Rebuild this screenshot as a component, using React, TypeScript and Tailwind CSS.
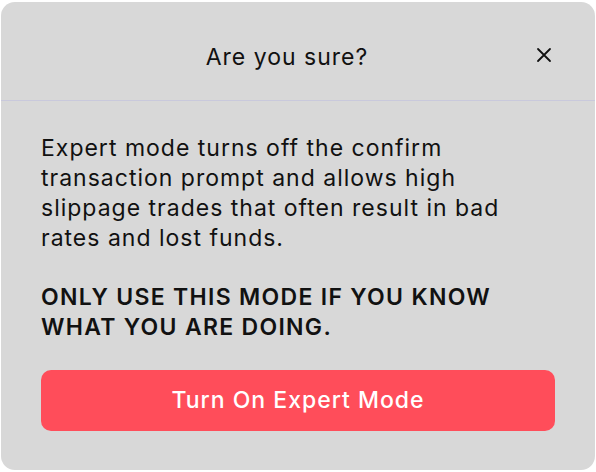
import React from "react";

export default function App() {
  return (
    <div className="w-[596px] h-[472px] bg-white p-[2px] pl-[1px]" style={{ fontFamily: "Inter, 'Noto Sans', sans-serif" }}>
      <div className="w-[594px] h-[468px] bg-[#d8d8d8] rounded-[14px] flex flex-col overflow-hidden tracking-[1px]">
        {/* Header */}
        <div className="relative h-[99px] flex items-center justify-center border-b border-[#c9c9dc] shrink-0">
          <h2 className="text-[23px] text-[#111] pt-[12px] pr-[22px]">Are you sure?</h2>
          <button className="absolute right-[42px] top-[44px] w-[18px] h-[18px] flex items-center justify-center text-[#111]">
            <svg width="16" height="16" viewBox="0 0 16 16" fill="none" stroke="currentColor" strokeWidth="1.8" strokeLinecap="round">
              <path d="M2 2L14 14M14 2L2 14" />
            </svg>
          </button>
        </div>

        {/* Body */}
        <div className="px-[40px] pt-[32px] flex flex-col">
          <p className="text-[23px] leading-[30px] text-[#111]">
            Expert mode turns off the confirm transaction prompt and allows high slippage trades that often result in bad rates and lost funds.
          </p>
          <p className="text-[23px] leading-[30px] font-semibold tracking-[1.3px] text-[#111] mt-[29px]">
            ONLY USE THIS MODE IF YOU KNOW WHAT YOU ARE DOING.
          </p>
          <button className="mt-[28px] h-[61px] w-full rounded-[10px] bg-[#ff4d5a] text-white text-[23px] font-medium">
            Turn On Expert Mode
          </button>
        </div>
      </div>
    </div>
  );
}
